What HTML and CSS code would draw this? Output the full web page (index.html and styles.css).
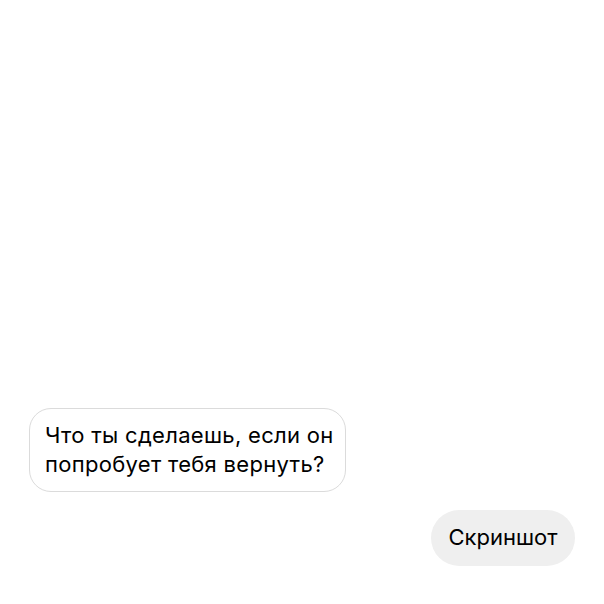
FILE: index.html
```html
<!DOCTYPE html>
<html lang="ru">
<head>
  <meta charset="UTF-8" />
  <meta name="viewport" content="width=device-width, initial-scale=1.0" />
  <title>Чат</title>
  <link rel="stylesheet" href="styles.css">
</head>
<body>
  <!-- Message thread -->
  <div class="thread">
    <div class="bubble incoming">Что ты сделаешь, если он<br>попробует тебя вернуть?</div>
    <div class="bubble outgoing">Скриншот</div>
  </div>
</body>
</html>
```

FILE: styles.css
```css
html, body {
  height: 100%;
}
body {
  margin: 0;
  background: #ffffff;
  font-family: "Inter", "Liberation Sans", sans-serif;
  color: #000;
}
.thread {
  height: 100%;
  box-sizing: border-box;
  display: flex;
  flex-direction: column;
  justify-content: flex-end;
  gap: 18px;
  padding: 0 29px 38px;
}
.bubble {
  font-size: 22px;
  line-height: 29px;
  box-sizing: border-box;
}
.incoming {
  align-self: flex-start;
  border: 1px solid #dbdbdb;
  border-radius: 22px;
  padding: 12px 0 12px 15px;
  height: 84px;
  width: 317px;
  letter-spacing: 0.3px;
}
.outgoing {
  align-self: flex-end;
  background: #efefef;
  border-radius: 28px;
  padding: 13px 0;
  height: 56px;
  width: 144px;
  text-align: center;
}
```
